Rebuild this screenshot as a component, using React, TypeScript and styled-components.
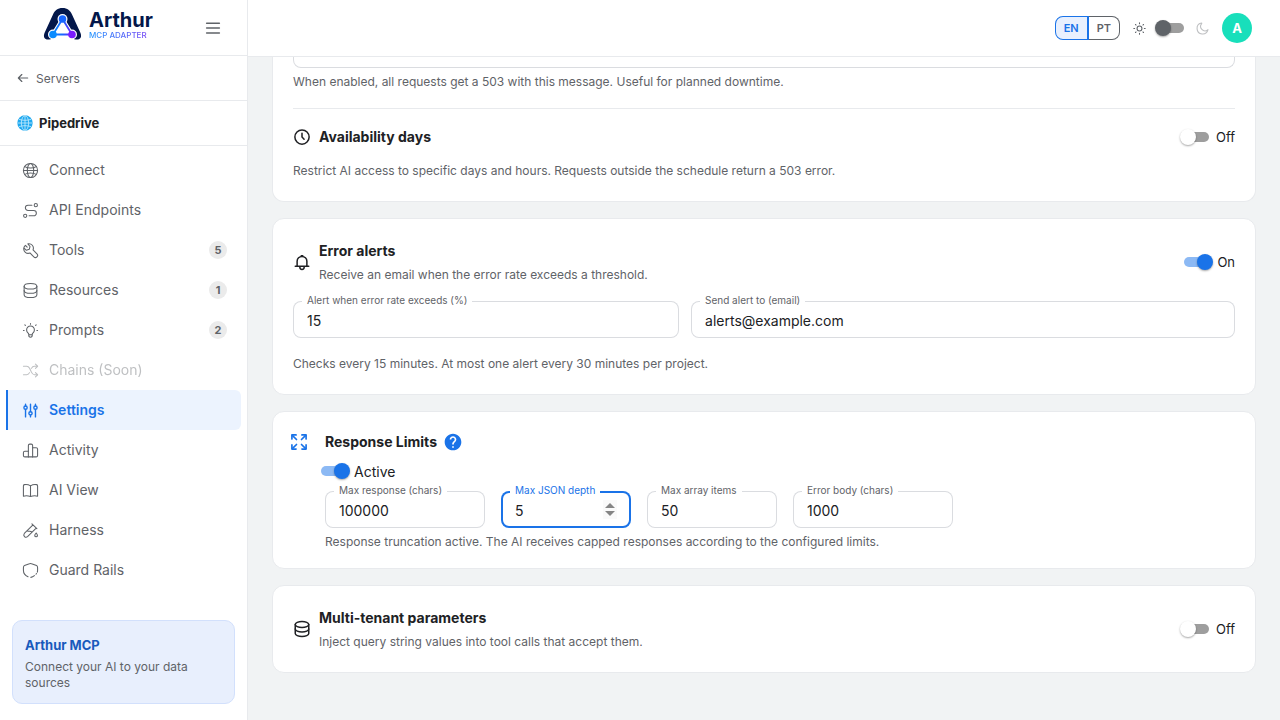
import React, { useId, useState } from 'react';
import styled, { createGlobalStyle, css } from 'styled-components';

const color = {
  blue: '#1a73e8',
  blueSoft: '#ecf3fe',
  text: '#202124',
  muted: '#5f6368',
  line: '#e8eaed',
  outline: '#dadce0',
  page: '#f1f3f4',
};

const GlobalStyle = createGlobalStyle`
  *, *::before, *::after { box-sizing: border-box; }
  body {
    margin: 0;
    background: ${color.page};
    color: ${color.text};
    font-family: Inter, "Liberation Sans", sans-serif;
    font-size: 14px;
  }
  button, input { font-family: inherit; }
  h1, h2, p { margin: 0; }
`;

/* ---------- icons ---------- */

type IconName =
  | 'globe' | 'route' | 'wrench' | 'database' | 'bulb' | 'shuffle' | 'sliders' | 'chart'
  | 'book' | 'tube' | 'shield' | 'clock' | 'bell' | 'expand' | 'back' | 'menu' | 'sun' | 'moon';

const shapes: Record<IconName, React.ReactNode> = {
  globe: (
    <>
      <circle cx="12" cy="12" r="10" />
      <ellipse cx="12" cy="12" rx="4.500" ry="10" />
      <path d="M2 12h20M4 6.500c2 1.300 4.800 2 8 2s6-.7 8-2M4 17.500c2-1.300 4.800-2 8-2s6 .7 8 2" />
    </>
  ),
  route: (
    <>
      <circle cx="19.500" cy="4.500" r="2.300" />
      <circle cx="4.500" cy="19.500" r="2.300" />
      <path d="M14 4.500H8.500a3.750 3.750 0 0 0 0 7.500h8a3.750 3.750 0 0 1 0 7.500H10" />
    </>
  ),
  wrench: (
    <path d="M8.300 2.600a6.300 6.300 0 0 1 7.300 8.500l5.500 5.500a3.100 3.100 0 0 1-4.400 4.400l-5.500-5.500A6.300 6.300 0 0 1 2.600 8.300l3.600 3.400 4-1.300 1.100-4-3-3.800zM2.600 8.300c.3-1.400 1.300-3 2.300-3.500l2.400 2.400" />
  ),
  database: (
    <>
      <ellipse cx="12" cy="6" rx="9" ry="4" />
      <path d="M3 6v12c0 2.200 4 4 9 4s9-1.800 9-4V6" />
      <path d="M3 12c0 2.200 4 4 9 4s9-1.800 9-4" />
    </>
  ),
  bulb: (
    <>
      <path d="M9.500 18.500v-1.300c0-.8-.6-1.300-1.300-2a5.500 5.500 0 1 1 7.600 0c-.7.7-1.300 1.200-1.300 2v1.300c0 1.900-1 3-2.500 3s-2.500-1.100-2.500-3zM9.500 18h5" />
      <path d="M12 2v1M22 12h-1M3 12H2M20 4l-.8.8M4.800 4.800 4 4" />
    </>
  ),
  shuffle: (
    <>
      <path d="M2 6h4.500c2 0 3.200 1 4.200 2.700l2.600 5.600c1 2.200 2.200 3.700 4.200 3.700H22M2 18h4.500c2 0 3.200-1 4.200-3M13.300 9c1-2 2.200-3 4.200-3H22" />
      <path d="m19 3 3 3-3 3M19 15l3 3-3 3" />
    </>
  ),
  sliders: (
    <>
      <circle cx="5" cy="8" r="2.300" />
      <circle cx="12" cy="16" r="2.300" />
      <circle cx="19" cy="8" r="2.300" />
      <path d="M5 5.500V3M5 10.500V21M12 13.500V3M12 18.500V21M19 5.500V3M19 10.500V21" />
    </>
  ),
  chart: (
    <>
      <path d="M9 21V5c0-1.400.6-2 2-2h2c1.400 0 2 .6 2 2v16" />
      <path d="M9 13H4c-1.400 0-2 .6-2 2v4c0 1.400.6 2 2 2h16c1.400 0 2-.6 2-2V10c0-1.400-.6-2-2-2h-5" />
    </>
  ),
  book: (
    <path d="M12 5.500v15M12 5.500C9.500 3.800 6 3.300 3.500 3.700 2.500 3.900 2 4.500 2 5.500V20c3.500-.8 7-.5 10 .6 3-1.100 6.500-1.400 10-.6V5.500c0-1-.5-1.600-1.500-1.800-2.500-.4-6 .1-8.500 1.800z" />
  ),
  tube: (
    <>
      <path d="m14 2.500 7 7M15.500 4 3.300 16.200a3.200 3.200 0 0 0 4.500 4.500L20 8.500M7.500 12.500c2 1.500 4-.5 6.500 1.500" />
      <path d="M20 15.500c1.200 1.500 1.800 2.500 1.800 3.500a1.900 1.900 0 0 1-3.800 0c0-1 .7-2 2-3.500z" />
    </>
  ),
  shield: (
    <>
      <path d="M8.500 20.800C4.500 19 2 16.400 2 11.500V8c0-2 .3-2.500 1.500-3L10.500 2.500a4 4 0 0 1 3 0L20.500 5C21.700 5.500 22 6 22 8v3.500c0 1-.1 1.900-.4 2.800" />
      <path d="M12.500 21.700c1.800-.3 3.500-1.200 5-2.400M19.700 17.200l.7-1" />
    </>
  ),
  clock: (
    <>
      <circle cx="12" cy="12" r="9.500" />
      <path d="M12 7v5l2.800 3" />
    </>
  ),
  bell: (
    <>
      <path d="M5.500 17.500V11a6.500 6.500 0 0 1 13 0v6.500M3 17.500h18M9 18c0 2.500 1 4 3 4s3-1.500 3-4" />
      <path d="M11 3.500h2" />
    </>
  ),
  expand: (
    <>
      <path d="M3.500 8.500v-5h5M15.500 3.500h5v5M20.500 15.500v5h-5M8.500 20.500h-5v-5" />
      <path d="M4 4l5 5M20 4l-5 5M20 20l-5-5M4 20l5-5" />
    </>
  ),
  back: <path d="M20 12H4M10 6l-6 6 6 6" />,
  menu: <path d="M3.500 5.500h17M3.500 12h17M3.500 18.500h17" />,
  sun: (
    <>
      <circle cx="12" cy="12" r="4.500" />
      <path d="M12 1.500v1.500M12 21v1.500M1.500 12H3M21 12h1.500M4.600 4.600l1 1M18.400 18.400l1 1M19.400 4.600l-1 1M5.600 18.400l-1 1" />
    </>
  ),
  moon: <path d="M21.500 14.500A8 8 0 0 1 10.500 3c.4-.8 0-1.300-.8-1A10.200 10.200 0 1 0 22 14.600c.2-.8-.1-.9-.5-.1z" />,
};

const Svg = styled.svg`
  display: block;
  flex: none;
  fill: none;
  stroke: currentColor;
  stroke-linecap: round;
  stroke-linejoin: round;
`;

const Icon = ({ name, size = 17, weight = 1.5 }: { name: IconName; size?: number; weight?: number }) => (
  <Svg width={size} height={size} viewBox="0 0 24 24" strokeWidth={weight} aria-hidden="true">
    {shapes[name]}
  </Svg>
);

const EarthIcon = () => (
  <svg width="16" height="16" viewBox="0 0 24 24" fill="none" aria-hidden="true">
    <circle cx="12" cy="12" r="11.500" fill="#1fa9f0" />
    <g stroke="#c8ecfd" strokeWidth="1.200">
      <ellipse cx="12" cy="12" rx="5.500" ry="11" />
      <path d="M12 1v22M1 12h22M3 6.500c5 2 13 2 18 0M3 17.500c5-2 13-2 18 0" />
    </g>
  </svg>
);

const HelpIcon = () => (
  <svg width="20" height="20" viewBox="0 0 24 24" fill="currentColor" aria-hidden="true">
    <path d="M12 2C6.480 2 2 6.480 2 12s4.480 10 10 10 10-4.480 10-10S17.520 2 12 2zm1 17h-2v-2h2v2zm2.070-7.750-.9.920C13.450 12.900 13 13.500 13 15h-2v-.5c0-1.100.45-2.100 1.170-2.830l1.240-1.260c.37-.36.59-.86.59-1.410 0-1.100-.9-2-2-2s-2 .9-2 2H8c0-2.210 1.790-4 4-4s4 1.790 4 4c0 .88-.36 1.680-.93 2.250z" />
  </svg>
);

const LogoMark = () => (
  <svg width="39" height="34" viewBox="0 0 39 34" aria-hidden="true">
    <defs>
      <linearGradient id="mark" gradientUnits="userSpaceOnUse" x1="9" y1="0" x2="30" y2="0">
        <stop offset="0" stopColor="#0a8bff" />
        <stop offset=".5" stopColor="#1766ff" />
        <stop offset="1" stopColor="#7a1cff" />
      </linearGradient>
    </defs>
    <path
      d="M19.500 1C14.500 1 11.800 3.500 10 7.500L1.500 26C0 30 1.500 32.500 5 32.500c2 0 3.500-.5 4.500-1.500h20c1 1 2.500 1.500 4.500 1.500 3.500 0 5-2.500 3.500-6.500L29 7.500C27.200 3.500 24.500 1 19.500 1z"
      fill="#03174a"
    />
    <g fill="#fff">
      <path d="m19.500 12-9.500 15.500h19z" stroke="#fff" strokeWidth="4" strokeLinejoin="round" />
      <circle cx="19.500" cy="12" r="5" />
      <circle cx="10" cy="27.500" r="5" />
      <circle cx="29" cy="27.500" r="5" />
      <path d="M9.500 28h20v5.500h-20z" />
    </g>
    <path d="m19.500 12-9.500 15.500h19z" fill="#fff" stroke="url(#mark)" strokeWidth="1.800" strokeLinejoin="round" />
    <circle cx="19.500" cy="12" r="3.800" fill="#1766ff" />
    <circle cx="10" cy="27.500" r="3.800" fill="#0a8bff" />
    <circle cx="29" cy="27.500" r="3.800" fill="#7a1cff" />
  </svg>
);

/* ---------- shell ---------- */

const Shell = styled.div`
  display: grid;
  grid-template-columns: 248px minmax(0, 1fr);
  min-height: 100vh;
`;

const Sidebar = styled.aside`
  display: flex;
  flex-direction: column;
  background: #fff;
  border-right: 1px solid ${color.line};
`;

const SidebarHeader = styled.div`
  display: flex;
  align-items: center;
  justify-content: space-between;
  height: 56px;
  padding: 0 25px 0 43px;
  border-bottom: 1px solid ${color.line};
`;

const Brand = styled.a`
  display: flex;
  align-items: center;
  gap: 7px;
  height: 48px;
  align-self: flex-start;
  text-decoration: none;
`;

const BrandText = styled.span`
  display: flex;
  flex-direction: column;
`;

const BrandName = styled.span`
  font-size: 20px;
  line-height: 22px;
  font-weight: 700;
  color: #03174a;
`;

const BrandTag = styled.span`
  width: max-content;
  font-size: 8px;
  line-height: 8px;
  font-weight: 500;
  color: transparent;
  background: linear-gradient(90deg, #2196ff, #7446f5);
  background-clip: text;
`;

const IconButton = styled.button`
  display: flex;
  padding: 0;
  border: 0;
  background: none;
  color: ${color.muted};
  cursor: pointer;
`;

const HelpButton = styled(IconButton)`
  color: ${color.blue};
`;

const BackLink = styled.a`
  display: flex;
  align-items: center;
  gap: 6px;
  height: 45px;
  padding: 0 16px;
  border-bottom: 1px solid ${color.line};
  color: ${color.muted};
  font-size: 12px;
  text-decoration: none;
`;

const Project = styled.div`
  display: flex;
  align-items: center;
  gap: 6px;
  height: 45px;
  padding: 0 17px;
  border-bottom: 1px solid ${color.line};
  font-size: 13px;
  font-weight: 700;
`;

const Nav = styled.nav`
  display: flex;
  flex-direction: column;
  flex: 1;
  padding: 4px 6px;
`;

const NavItem = styled.a<{ $active?: boolean; $disabled?: boolean }>`
  display: flex;
  align-items: center;
  gap: 10px;
  height: 40px;
  padding: 0 14px;
  border-left: 2px solid transparent;
  color: ${color.muted};
  font-size: 14px;
  line-height: 18px;
  text-decoration: none;
  ${(p) => p.$disabled && css`opacity: 0.4;`}
  ${(p) =>
    p.$active &&
    css`
      border-color: ${color.blue};
      border-radius: 0 6px 6px 0;
      background: ${color.blueSoft};
      color: ${color.blue};
      font-weight: 600;
    `}
`;

const Count = styled.span`
  display: grid;
  place-items: center;
  width: 18px;
  height: 18px;
  margin-left: auto;
  border-radius: 9px;
  background: #ebebeb;
  font-size: 11px;
  font-weight: 700;
`;

const Promo = styled.section`
  margin: 0 12px 16px;
  padding: 14px 12px 12px;
  border: 1px solid #d2e0fc;
  border-radius: 10px;
  background: #e8effd;
`;

const PromoTitle = styled.h2`
  margin-bottom: 4px;
  color: #185abc;
  font-size: 13px;
  line-height: 20px;
  font-weight: 700;
`;

const PromoText = styled.p`
  color: ${color.muted};
  font-size: 12px;
  line-height: 16px;
`;

const Page = styled.div`
  display: flex;
  flex-direction: column;
`;

const TopBar = styled.header`
  display: flex;
  align-items: center;
  justify-content: flex-end;
  height: 57px;
  padding: 0 28px;
  border-bottom: 1px solid ${color.line};
  background: #fff;
`;

const Languages = styled.div`
  display: flex;
  margin-right: 13px;
`;

const Language = styled.button<{ $active?: boolean }>`
  height: 24px;
  padding: 0 8px;
  border: 1px solid ${(p) => (p.$active ? color.blue : color.muted)};
  background: ${(p) => (p.$active ? '#e8f0fe' : '#fff')};
  color: ${(p) => (p.$active ? color.blue : color.muted)};
  font-size: 11px;
  line-height: 16px;
  font-weight: 600;
  cursor: pointer;
  &:first-child { border-right-width: 2px; border-radius: 8px 0 0 8px; }
  &:last-child { border-left: 0; border-radius: 0 8px 8px 0; }
`;

const ThemeToggle = styled.div`
  display: flex;
  align-items: center;
  gap: 5px;
  margin-right: 13px;
  color: ${color.muted};
`;

const Dim = styled.span`
  opacity: 0.4;
`;

const Avatar = styled.button`
  width: 30px;
  height: 30px;
  padding: 0;
  border: 0;
  border-radius: 50%;
  background: #18dfbb;
  color: #fff;
  font-size: 13px;
  font-weight: 700;
`;

/* ---------- controls ---------- */

const SwitchInput = styled.input<{ $dark?: boolean }>`
  position: relative;
  flex: none;
  appearance: none;
  width: 40px;
  height: 24px;
  margin: 0;
  cursor: pointer;
  &::before {
    content: '';
    position: absolute;
    inset: 7px;
    border-radius: 5px;
    background: #9e9e9e;
  }
  &::after {
    content: '';
    position: absolute;
    top: 4px;
    left: 4px;
    width: 16px;
    height: 16px;
    border-radius: 50%;
    background: ${(p) => (p.$dark ? color.muted : '#fff')};
    box-shadow: 0 1px 2px rgba(0, 0, 0, 0.35);
  }
  &:checked::before { background: #8cb9f4; }
  &:checked::after { left: 20px; background: ${color.blue}; }
`;

const SwitchLabel = styled.label<{ $large?: boolean }>`
  display: flex;
  align-items: center;
  font-size: ${(p) => (p.$large ? 14 : 13)}px;
  cursor: pointer;
`;

const Toggle = ({ initial, labels, large }: { initial: boolean; labels: [string, string]; large?: boolean }) => {
  const [on, setOn] = useState(initial);
  return (
    <SwitchLabel $large={large}>
      <SwitchInput type="checkbox" role="switch" checked={on} onChange={() => setOn(!on)} />
      {on ? labels[1] : labels[0]}
    </SwitchLabel>
  );
};

const FieldBox = styled.div<{ $width?: number; $focused?: boolean }>`
  position: relative;
  display: flex;
  align-items: center;
  width: ${(p) => (p.$width ? `${p.$width}px` : 'auto')};
  height: 37px;
  padding: 0 14px;
  border-radius: 8px;
  box-shadow: inset 0 0 0 ${(p) => (p.$focused ? `2px ${color.blue}` : `1px ${color.outline}`)};
`;

const FieldLabel = styled.label<{ $focused?: boolean }>`
  position: absolute;
  top: -8px;
  left: 9px;
  padding: 0 5px;
  background: #fff;
  color: ${(p) => (p.$focused ? color.blue : color.muted)};
  font-size: 10px;
  line-height: 14px;
  white-space: nowrap;
`;

const FieldInput = styled.input`
  flex: 1;
  min-width: 0;
  height: 24px;
  padding: 1px 0 0;
  border: 0;
  outline: 0;
  background: none;
  color: ${color.text};
  font-size: 14px;
  appearance: textfield;
  &::-webkit-inner-spin-button { display: none; }
`;

const Stepper = styled.span`
  display: flex;
  flex-direction: column;
  gap: 3px;
  padding: 3px 2px;
  background: #fafafa;
`;

const Step = styled.button<{ $down?: boolean }>`
  width: 10px;
  height: 5px;
  padding: 0;
  border: 0;
  background: #858585;
  clip-path: ${(p) => (p.$down ? 'polygon(0 0, 100% 0, 50% 100%)' : 'polygon(50% 0, 100% 100%, 0 100%)')};
`;

interface FieldProps {
  label: string;
  value: string;
  type?: string;
  width?: number;
  focused?: boolean;
}

const Field = ({ label, value, type = 'number', width, focused }: FieldProps) => {
  const id = useId();
  const [current, setCurrent] = useState(value);
  const step = (by: number) => setCurrent(String(Number(current) + by));
  return (
    <FieldBox $width={width} $focused={focused}>
      <FieldLabel htmlFor={id} $focused={focused}>{label}</FieldLabel>
      <FieldInput id={id} type={type} value={current} onChange={(e) => setCurrent(e.target.value)} />
      {focused && (
        <Stepper>
          <Step type="button" aria-label="Increase" onClick={() => step(1)} />
          <Step type="button" aria-label="Decrease" $down onClick={() => step(-1)} />
        </Stepper>
      )}
    </FieldBox>
  );
};

/* ---------- cards ---------- */

const Content = styled.main`
  display: flex;
  flex-direction: column;
  gap: 16px;
  padding: 0 24px 24px;
`;

const Card = styled.section<{ $tight?: boolean; $continued?: boolean }>`
  padding: ${(p) => (p.$tight ? 16 : 20)}px;
  border: 1px solid ${color.line};
  border-radius: 12px;
  background: #fff;
  ${(p) =>
    p.$continued &&
    css`
      padding-top: 0;
      border-top: 0;
      border-radius: 0 0 12px 12px;
    `}
`;

const MessageInput = styled.input`
  display: block;
  width: 100%;
  height: 11px;
  padding: 0 14px;
  border: 1px solid ${color.outline};
  border-top: 0;
  border-radius: 0 0 8px 8px;
  outline: 0;
`;

const Note = styled.p<{ $gap?: number }>`
  margin-top: ${(p) => p.$gap ?? 0}px;
  color: ${color.muted};
  font-size: 12px;
  line-height: 20px;
`;

const Divider = styled.hr`
  height: 1px;
  margin: 16px 0;
  border: 0;
  background: ${color.line};
`;

const CardHeader = styled.div`
  display: flex;
  align-items: center;
  gap: 8px;
`;

const Heading = styled.div`
  flex: 1;
`;

const Title = styled.h2`
  font-size: 14px;
  line-height: 24px;
  font-weight: 700;
`;

const AlertFields = styled.div`
  display: grid;
  grid-template-columns: 22fr 31fr;
  gap: 12px;
  margin-top: 16px;
`;

const LimitsLayout = styled.div`
  display: flex;
  gap: 16px;
`;

const LimitsIcon = styled.div`
  display: flex;
  align-items: center;
  height: 28px;
  color: ${color.blue};
`;

const LimitsTitle = styled.div`
  display: flex;
  align-items: center;
  gap: 6px;
  height: 28px;
`;

const LimitsSwitch = styled.div`
  display: flex;
  margin: 3px 0 8px -11px;
`;

const LimitFields = styled.div`
  display: flex;
  flex-wrap: wrap;
  gap: 16px;
`;

const navItems: { icon: IconName; label: string; count?: number; active?: boolean; disabled?: boolean }[] = [
  { icon: 'globe', label: 'Connect' },
  { icon: 'route', label: 'API Endpoints' },
  { icon: 'wrench', label: 'Tools', count: 5 },
  { icon: 'database', label: 'Resources', count: 1 },
  { icon: 'bulb', label: 'Prompts', count: 2 },
  { icon: 'shuffle', label: 'Chains (Soon)', disabled: true },
  { icon: 'sliders', label: 'Settings', active: true },
  { icon: 'chart', label: 'Activity' },
  { icon: 'book', label: 'AI View' },
  { icon: 'tube', label: 'Harness' },
  { icon: 'shield', label: 'Guard Rails' },
];

export default function App() {
  const [dark, setDark] = useState(false);
  return (
    <>
      <GlobalStyle />
      <Shell>
        <Sidebar>
          <SidebarHeader>
            <Brand href="#home">
              <LogoMark />
              <BrandText>
                <BrandName>Arthur</BrandName>
                <BrandTag>MCP ADAPTER</BrandTag>
              </BrandText>
            </Brand>
            <IconButton type="button" aria-label="Collapse menu">
              <Icon name="menu" size={18} weight={2} />
            </IconButton>
          </SidebarHeader>
          <BackLink href="#servers">
            <Icon name="back" size={14} weight={2} />
            Servers
          </BackLink>
          <Project>
            <EarthIcon />
            Pipedrive
          </Project>
          <Nav>
            {navItems.map((item) => (
              <NavItem
                key={item.label}
                href={`#${item.icon}`}
                $active={item.active}
                $disabled={item.disabled}
                aria-current={item.active ? 'page' : undefined}
                aria-disabled={item.disabled}
              >
                <Icon name={item.icon} weight={item.active ? 2 : 1.5} />
                {item.label}
                {item.count && <Count>{item.count}</Count>}
              </NavItem>
            ))}
          </Nav>
          <Promo>
            <PromoTitle>Arthur MCP</PromoTitle>
            <PromoText>Connect your AI to your data sources</PromoText>
          </Promo>
        </Sidebar>

        <Page>
          <TopBar>
            <Languages>
              <Language type="button" $active>EN</Language>
              <Language type="button">PT</Language>
            </Languages>
            <ThemeToggle>
              <Icon name="sun" size={13} weight={2} />
              <SwitchInput
                type="checkbox"
                role="switch"
                aria-label="Dark theme"
                $dark
                checked={dark}
                onChange={() => setDark(!dark)}
              />
              <Dim>
                <Icon name="moon" size={13} weight={2} />
              </Dim>
            </ThemeToggle>
            <Avatar type="button">A</Avatar>
          </TopBar>

          <Content>
            <Card $continued>
              <MessageInput type="text" aria-label="Maintenance message" />
              <Note $gap={4}>
                When enabled, all requests get a 503 with this message. Useful for planned downtime.
              </Note>
              <Divider />
              <CardHeader>
                <Icon name="clock" size={18} weight={2} />
                <Heading>
                  <Title>Availability days</Title>
                </Heading>
                <Toggle initial={false} labels={['Off', 'On']} />
              </CardHeader>
              <Note $gap={12}>
                Restrict AI access to specific days and hours. Requests outside the schedule return a 503 error.
              </Note>
            </Card>

            <Card>
              <CardHeader>
                <Icon name="bell" size={18} weight={2} />
                <Heading>
                  <Title>Error alerts</Title>
                  <Note $gap={2}>Receive an email when the error rate exceeds a threshold.</Note>
                </Heading>
                <Toggle initial labels={['Off', 'On']} />
              </CardHeader>
              <AlertFields>
                <Field label="Alert when error rate exceeds (%)" value="15" />
                <Field label="Send alert to (email)" value="alerts@example.com" type="email" />
              </AlertFields>
              <Note $gap={16}>Checks every 15 minutes. At most one alert every 30 minutes per project.</Note>
            </Card>

            <Card $tight>
              <LimitsLayout>
                <LimitsIcon>
                  <Icon name="expand" size={20} weight={2} />
                </LimitsIcon>
                <Heading>
                  <LimitsTitle>
                    <Title>Response Limits</Title>
                    <HelpButton type="button" aria-label="About response limits">
                      <HelpIcon />
                    </HelpButton>
                  </LimitsTitle>
                  <LimitsSwitch>
                    <Toggle initial labels={['Inactive', 'Active']} large />
                  </LimitsSwitch>
                  <LimitFields>
                    <Field label="Max response (chars)" value="100000" width={160} />
                    <Field label="Max JSON depth" value="5" width={130} focused />
                    <Field label="Max array items" value="50" width={130} />
                    <Field label="Error body (chars)" value="1000" width={160} />
                  </LimitFields>
                  <Note $gap={4}>
                    Response truncation active. The AI receives capped responses according to the configured limits.
                  </Note>
                </Heading>
              </LimitsLayout>
            </Card>

            <Card>
              <CardHeader>
                <Icon name="database" size={18} weight={2} />
                <Heading>
                  <Title>Multi-tenant parameters</Title>
                  <Note $gap={2}>Inject query string values into tool calls that accept them.</Note>
                </Heading>
                <Toggle initial={false} labels={['Off', 'On']} />
              </CardHeader>
            </Card>
          </Content>
        </Page>
      </Shell>
    </>
  );
}
